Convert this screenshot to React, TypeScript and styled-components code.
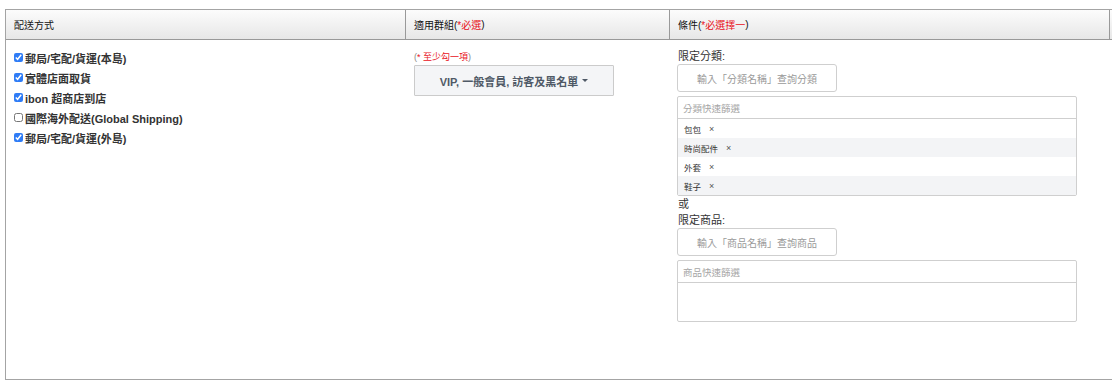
import React from "react";
import styled, { createGlobalStyle } from "styled-components";

const GlobalStyle = createGlobalStyle`
  html, body {
    margin: 0;
    padding: 0;
    background: #fff;
    overflow: hidden;
  }
  body {
    font-family: "Liberation Sans", "Noto Sans CJK TC", sans-serif;
    color: #333;
  }
`;

const Page = styled.div`
  padding: 9px 0 0 5px;
  width: 1112px;
  height: 389px;
  box-sizing: border-box;
  overflow: hidden;
`;

const Table = styled.div`
  width: 1140px;
  border-top: 1px solid #a4a4a4;
  border-left: 1px solid #a4a4a4;
  border-bottom: 1px solid #a4a4a4;
`;

const Row = styled.div`
  display: grid;
  grid-template-columns: 399px 264px 440px 1fr;
`;

const HeadRow = styled(Row)`
  height: 29px;
  border-bottom: 1px solid #999;
  background: linear-gradient(#fcfcfc, #e7e7e7);
`;

const HeadCell = styled.div<{ $divider?: boolean }>`
  box-sizing: border-box;
  display: flex;
  align-items: center;
  padding-left: 8px;
  font-size: 10px;
  color: #111;
  border-left: ${(p) => (p.$divider ? "1px solid #999" : "none")};
`;

const Required = styled.span`
  color: #e8101a;
`;

const BodyRow = styled(Row)`
  height: 339px;
`;

const BodyCell = styled.div<{ $pad: number; $top: number }>`
  box-sizing: border-box;
  padding: ${(p) => p.$top}px 0 0 ${(p) => p.$pad}px;
  display: flex;
  flex-direction: column;
  align-items: flex-start;
`;

const CheckRow = styled.label`
  display: flex;
  align-items: center;
  height: 20px;
  font-size: 11px;
  font-weight: bold;
  color: #333;
  white-space: nowrap;
`;

const Check = styled.input`
  width: 9px;
  height: 9px;
  margin: 0 2px 0 0;
  transform: translateY(-1px);
  accent-color: #2f7cf6;
`;

const Hint = styled.div`
  font-size: 9px;
  line-height: 14px;
  height: 15px;
  color: #888;
`;

const DropButton = styled.button`
  box-sizing: border-box;
  width: 200px;
  height: 31px;
  border: 1px solid #cbcbcb;
  background: #f4f5f7;
  border-radius: 1px;
  font-family: inherit;
  font-size: 11px;
  font-weight: bold;
  color: #4f5966;
  display: flex;
  align-items: center;
  justify-content: center;
  padding: 0;
`;

const Caret = styled.span`
  display: inline-block;
  margin-left: 4px;
  border-top: 3px solid #4f5966;
  border-left: 3px solid transparent;
  border-right: 3px solid transparent;
`;

const Label = styled.div`
  font-size: 11px;
  line-height: 16px;
  color: #333;
  padding-left: 1px;
`;

const SearchInput = styled.div`
  box-sizing: border-box;
  width: 160px;
  height: 28px;
  border: 1px solid #cfcfcf;
  border-radius: 3px;
  display: flex;
  align-items: center;
  justify-content: center;
  font-size: 10px;
  color: #9a9a9a;
`;

const FilterBox = styled.div`
  box-sizing: border-box;
  width: 400px;
  margin-top: 4px;
  border: 1px solid #cfcfcf;
  border-radius: 2px;
`;

const FilterHead = styled.div`
  height: 21px;
  border-bottom: 1px solid #cfcfcf;
  display: flex;
  align-items: center;
  padding-left: 5px;
  font-size: 9.5px;
  color: #a5a5a5;
`;

const FilterList = styled.div<{ $empty?: boolean }>`
  min-height: ${(p) => (p.$empty ? "38px" : "0")};
`;

const Tag = styled.div<{ $alt: boolean }>`
  height: 19px;
  display: flex;
  align-items: center;
  padding-left: 6px;
  font-size: 8.5px;
  color: #333;
  background: ${(p) => (p.$alt ? "#f3f4f6" : "#fff")};
`;

const Remove = styled.span`
  margin-left: 8px;
  font-size: 9px;
  color: #555;
`;

const methods = [
  { text: "郵局/宅配/貨運(本島)", checked: true },
  { text: "實體店面取貨", checked: true },
  { text: "ibon 超商店到店", checked: true },
  { text: "國際海外配送(Global Shipping)", checked: false },
  { text: "郵局/宅配/貨運(外島)", checked: true },
];

const categories = ["包包", "時尚配件", "外套", "鞋子"];

export default function App() {
  return (
    <Page>
      <GlobalStyle />
      <Table>
        <HeadRow>
          <HeadCell>配送方式</HeadCell>
          <HeadCell $divider>
            適用群組(<Required>*必選</Required>)
          </HeadCell>
          <HeadCell $divider>
            條件(<Required>*必選擇一</Required>)
          </HeadCell>
          <HeadCell $divider />
        </HeadRow>
        <BodyRow>
          <BodyCell $pad={8} $top={8}>
            {methods.map((m) => (
              <CheckRow key={m.text}>
                <Check type="checkbox" defaultChecked={m.checked} />
                {m.text}
              </CheckRow>
            ))}
          </BodyCell>
          <BodyCell $pad={9} $top={10}>
            <Hint>
              (<Required>* 至少勾一項</Required>)
            </Hint>
            <DropButton>
              VIP, 一般會員, 訪客及黑名單
              <Caret />
            </DropButton>
          </BodyCell>
          <BodyCell $pad={8} $top={8}>
            <Label>限定分類:</Label>
            <SearchInput>輸入「分類名稱」查詢分類</SearchInput>
            <FilterBox>
              <FilterHead>分類快速篩選</FilterHead>
              <FilterList>
                {categories.map((c, i) => (
                  <Tag key={c} $alt={i % 2 === 1}>
                    {c}
                    <Remove>×</Remove>
                  </Tag>
                ))}
              </FilterList>
            </FilterBox>
            <Label>或</Label>
            <Label>限定商品:</Label>
            <SearchInput>輸入「商品名稱」查詢商品</SearchInput>
            <FilterBox>
              <FilterHead>商品快速篩選</FilterHead>
              <FilterList $empty />
            </FilterBox>
          </BodyCell>
          <BodyCell $pad={0} $top={0} />
        </BodyRow>
      </Table>
    </Page>
  );
}
